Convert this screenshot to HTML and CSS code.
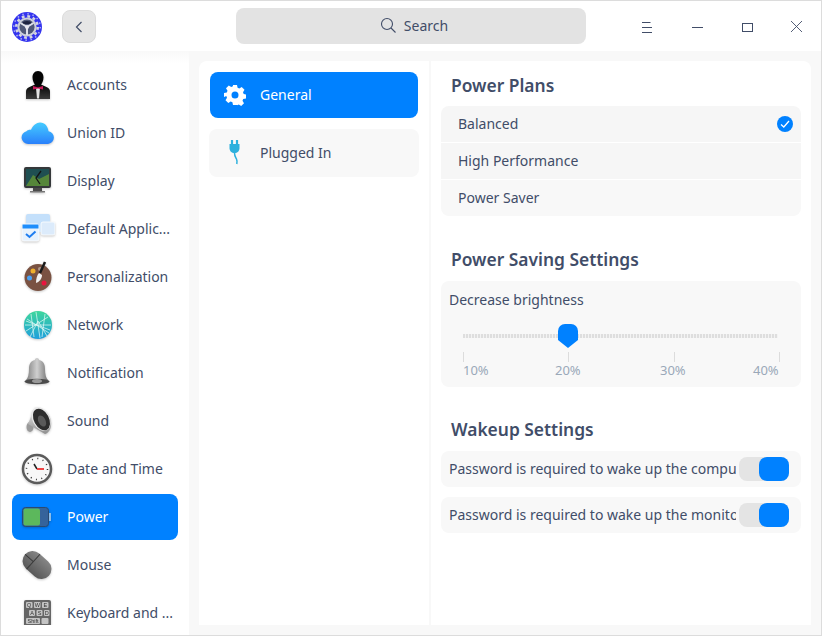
FILE: index.html
```html
<!DOCTYPE html>
<html lang="en">
<head>
<meta charset="utf-8">
<title>Control Center</title>
<link rel="stylesheet" href="styles.css">
</head>
<body>
<div class="window">
  <header class="titlebar">
    <div class="title-left">
      <svg class="logo" width="30" height="30" viewBox="0 0 30 30">
        <circle cx="15" cy="15" r="15" fill="#3434ee"/>
        <circle cx="15" cy="15" r="13.2" fill="none" stroke="#a9abf5" stroke-width="1.600" stroke-dasharray="1.500 3.680"/>
        <circle cx="15" cy="15" r="10.700" fill="none" stroke="#d4d6df" stroke-width="2.600" stroke-dasharray="2.800 2.800"/>
        <circle cx="15" cy="15" r="9.600" fill="#cdd0da"/>
        <circle cx="15" cy="15" r="7.600" fill="#4f5878"/>
        <path d="M15 15L8.500 11M15 15L21.500 11M15 15V23" stroke="#dfe1ea" stroke-width="2"/>
        <ellipse cx="15" cy="10.500" rx="4.200" ry="1.600" fill="#1d2340"/>
        <circle cx="15" cy="15" r="2" fill="#e8e8f2"/>
      </svg>
      <button class="back" type="button" aria-label="Back">
        <svg width="8" height="12" viewBox="0 0 8 12"><path d="M6.500 1L1.500 6l5 5" fill="none" stroke="#414d68" stroke-width="1.200"/></svg>
      </button>
    </div>
    <div class="search">
      <svg width="16" height="16" viewBox="0 0 16 16"><circle cx="7" cy="7" r="5.500" fill="none" stroke="#414d68" stroke-width="1.100"/><path d="M11 11l4.500 4.500" stroke="#414d68" stroke-width="1.100"/></svg>
      <span>Search</span>
    </div>
    <div class="winbtns">
      <svg class="winbtn" width="50" height="50" viewBox="0 0 50 50"><path d="M21 21.500h8.500M21 26.500h10M21 31.500h10" stroke="#414d68" stroke-width="1"/></svg>
      <svg class="winbtn" width="50" height="50" viewBox="0 0 50 50"><path d="M21 26.500h11" stroke="#414d68" stroke-width="1"/></svg>
      <svg class="winbtn" width="50" height="50" viewBox="0 0 50 50"><rect x="21.500" y="22.500" width="10" height="8" fill="none" stroke="#414d68" stroke-width="1"/></svg>
      <svg class="winbtn" width="50" height="50" viewBox="0 0 50 50"><path d="M20 20l11 11M31 20L20 31" stroke="#414d68" stroke-width=".9"/></svg>
    </div>
  </header>
  <div class="body">
    <nav class="sidebar">
      <div class="nav-list">
        <div class="nav-item">
          <svg class="nav-icon" width="34" height="32" viewBox="0 0 34 32"><defs><linearGradient id="su" x1="0" y1="0" x2="0" y2="1"><stop offset=".5" stop-color="#050505"/><stop offset="1" stop-color="#3c3c3c"/></linearGradient></defs><path d="M17 2c3.700 0 5.500 3 5.500 6.500 0 3-1.500 6-2.500 7l5.500 2.500c3 1 3.500 3 3.500 5v7H5v-7c0-2 .5-4 3.500-5l5.500-2.500c-1-1-2.500-4-2.500-7C11.500 5 13.300 2 17 2z" fill="url(#su)"/><path d="M15 19h4l-1 10.500h-2z" fill="#e4e4e4"/><path d="M12 17l5 1.500 5-1.500v3.500l-5-1-5 1z" fill="#c8185a"/></svg>
          <span class="nav-label">Accounts</span>
        </div>
        <div class="nav-item">
          <svg class="nav-icon" width="34" height="32" viewBox="0 0 34 32"><defs><linearGradient id="cl" x1="0" y1="0" x2="0" y2="1"><stop offset="0" stop-color="#45ccff"/><stop offset="1" stop-color="#2a80fb"/></linearGradient></defs><path d="M7 27a6.500 6.500 0 0 1-1.500-12.800c1-1.200 2.500-1.700 4.500-1.500C12 8.500 15.500 5.500 19 5.500c5 0 8 4 8.500 8.800A6.400 6.400 0 0 1 27 27z" fill="url(#cl)"/></svg>
          <span class="nav-label">Union ID</span>
        </div>
        <div class="nav-item">
          <svg class="nav-icon" width="34" height="32" viewBox="0 0 34 32"><rect x="3" y="2" width="27" height="21" rx="2" fill="#35383a"/><rect x="5" y="4" width="23" height="17" fill="#1f4f52"/><path d="M5 21l7-11 6 4 10-5v12z" fill="#55863a"/><path d="M20 6l-5 7 4 6" fill="none" stroke="#141414" stroke-width="1.300"/><rect x="12" y="23" width="9" height="3" fill="#4a4a4a"/><rect x="9" y="26" width="15" height="1.500" fill="#777"/></svg>
          <span class="nav-label">Display</span>
        </div>
        <div class="nav-item">
          <svg class="nav-icon" width="34" height="32" viewBox="0 0 34 32"><rect x="5" y="1" width="24" height="18" rx="2" fill="#c4e0fb"/><rect x="20" y="9" width="14" height="13" rx="2" fill="#dcebfb" stroke="#fff" stroke-width=".8"/><rect x="1" y="11" width="17" height="17" rx="2" fill="#e7f2fd" stroke="#fff" stroke-width=".8"/><rect x="1.500" y="11.500" width="16" height="4" fill="#1e8efc"/><path d="M5 21l3.500 3 6-5.500" fill="none" stroke="#1e7df0" stroke-width="2"/></svg>
          <span class="nav-label">Default Applic...</span>
        </div>
        <div class="nav-item">
          <svg class="nav-icon" width="34" height="32" viewBox="0 0 34 32"><circle cx="17" cy="16.500" r="13.500" fill="#7a5242"/><circle cx="12" cy="10" r="2.500" fill="#efb02d"/><circle cx="19" cy="8" r="2" fill="#b09a8c"/><circle cx="8.500" cy="17" r="2.500" fill="#4aa2f4"/><circle cx="23" cy="22" r="2.500" fill="#e8153f"/><path d="M24 1l-5 11" stroke="#1a1a1a" stroke-width="2.500"/><path d="M18 12c-2 2-3 6-3 10 3-1 6-4 6-8z" fill="#f2f2f2"/></svg>
          <span class="nav-label">Personalization</span>
        </div>
        <div class="nav-item">
          <svg class="nav-icon" width="34" height="32" viewBox="0 0 34 32"><defs><linearGradient id="nw" x1="0" y1="0" x2="0" y2="1"><stop offset="0" stop-color="#3ed79c"/><stop offset="1" stop-color="#1e9fdc"/></linearGradient></defs><circle cx="17" cy="16" r="14" fill="url(#nw)"/><path d="M15 3l4 26M5 22L27 8M6 10l22 14M17 12L9 28M17 12l9 15M4 16h26M10 5l3 23M24 5l-3 23M5 12l24 9" stroke="#e6fbf6" stroke-width=".7" fill="none"/></svg>
          <span class="nav-label">Network</span>
        </div>
        <div class="nav-item">
          <svg class="nav-icon" width="34" height="32" viewBox="0 0 34 32"><defs><linearGradient id="bl" x1="0" y1="0" x2="1" y2="0"><stop offset="0" stop-color="#808080"/><stop offset=".5" stop-color="#cfcfcf"/><stop offset="1" stop-color="#747474"/></linearGradient></defs><path d="M16 1c1.500 0 2 1 2 2 5 1 6 5 6 9 0 5 1 9 3 11H5c2-2 3-6 3-11 0-4 1-8 6-9 0-1 .5-2 2-2z" fill="url(#bl)"/><ellipse cx="16" cy="24.500" rx="12.500" ry="2.800" fill="#4b4b4b"/><ellipse cx="16" cy="24" rx="5" ry="2" fill="#999"/></svg>
          <span class="nav-label">Notification</span>
        </div>
        <div class="nav-item">
          <svg class="nav-icon" width="34" height="32" viewBox="0 0 34 32"><defs><linearGradient id="sd" x1="0" y1="0" x2="0" y2="1"><stop offset="0" stop-color="#f2f2f2"/><stop offset="1" stop-color="#8f8f8f"/></linearGradient></defs><ellipse cx="9" cy="22" rx="3.500" ry="5" fill="#9a9a9a"/><path d="M14 2L7 19l17 10c4-1 7-6 6-13-1-8-8-15-16-14z" fill="url(#sd)"/><ellipse cx="20" cy="14" rx="8.500" ry="12.500" transform="rotate(-28 20 14)" fill="#e9e9e9"/><ellipse cx="20.500" cy="14.500" rx="7.500" ry="11.500" transform="rotate(-28 20.500 14.500)" fill="#2e2e2e"/><ellipse cx="21" cy="16" rx="3.500" ry="6" transform="rotate(-28 21 16)" fill="#5a5a5a"/></svg>
          <span class="nav-label">Sound</span>
        </div>
        <div class="nav-item">
          <svg class="nav-icon" width="34" height="32" viewBox="0 0 34 32"><circle cx="16" cy="16" r="14" fill="#f8f8f8" stroke="#5b5b5b" stroke-width="2.500"/><circle cx="16" cy="16" r="10.500" fill="none" stroke="#333" stroke-width="1.500" stroke-dasharray="1 4.500"/><path d="M13 11l3 5" stroke="#222" stroke-width="1.500"/><path d="M16 16h7" stroke="#e33" stroke-width="1.800"/></svg>
          <span class="nav-label">Date and Time</span>
        </div>
        <div class="nav-item active">
          <svg class="nav-icon" width="34" height="32" viewBox="0 0 34 32"><rect x="1.500" y="6.500" width="26" height="19" rx="3" fill="#35639b" stroke="#2a4a70"/><rect x="2.500" y="7.500" width="16.500" height="17" rx="2" fill="#5cb85c"/><rect x="28" y="12" width="2" height="8" fill="#8dbde8"/></svg>
          <span class="nav-label">Power</span>
        </div>
        <div class="nav-item">
          <svg class="nav-icon" width="34" height="32" viewBox="0 0 34 32"><defs><linearGradient id="ms" x1="0" y1="0" x2="0" y2="1"><stop offset="0" stop-color="#858585"/><stop offset="1" stop-color="#585858"/></linearGradient></defs><g transform="rotate(42 16 16)"><rect x="0" y="6" width="32" height="20" rx="10" fill="url(#ms)"/><path d="M11 6v20M0 16h11" stroke="#3a3a3a" stroke-width="1"/></g></svg>
          <span class="nav-label">Mouse</span>
        </div>
        <div class="nav-item">
          <svg class="nav-icon" width="34" height="32" viewBox="0 0 34 32"><rect x="3" y="3" width="27" height="29" rx="2" fill="#666"/><g fill="#c4c4c4"><rect x="5" y="5" width="6.500" height="6" rx="1"/><rect x="13" y="5" width="6.500" height="6" rx="1"/><rect x="21" y="5" width="6.500" height="6" rx="1"/><rect x="8" y="13" width="6" height="6" rx="1"/><rect x="15.500" y="13" width="6" height="6" rx="1"/><rect x="23" y="13" width="5.500" height="6" rx="1"/><rect x="5" y="21" width="14" height="6" rx="1"/><rect x="20.500" y="21" width="7" height="6" rx="1"/></g><g class="key-text"><text x="8.250" y="10">Q</text><text x="16.250" y="10">W</text><text x="24.250" y="10">E</text><text x="11" y="18">A</text><text x="18.500" y="18">S</text><text x="25.750" y="18">D</text><text x="12" y="26">Shift</text></g></svg>
          <span class="nav-label">Keyboard and ...</span>
        </div>
      </div>
    </nav>
    <div class="content">
      <aside class="subnav">
        <div class="sub-item selected">
          <svg class="sub-icon" width="22" height="22" viewBox="0 0 22 22"><path fill-rule="evenodd" fill="#fff" d="M9 1h4l.6 2.800 1.700.7 2.400-1.500 2.800 2.800-1.500 2.400.7 1.700 2.300.6v4l-2.800.6-.7 1.700 1.500 2.400-2.800 2.800-2.400-1.500-1.700.7L13 21H9l-.6-2.800-1.700-.7-2.400 1.500-2.800-2.800 1.500-2.400-.7-1.700L0 13V9l2.800-.6.7-1.700L2 4.300 4.800 1.500l2.400 1.500 1.700-.7zM11 7.500a3.500 3.500 0 1 0 0 7 3.500 3.500 0 0 0 0-7z"/></svg>
          <span>General</span>
        </div>
        <div class="sub-item plugged">
          <svg class="sub-icon" width="22" height="28" viewBox="0 0 22 28"><path d="M8 1v4M13 1v4" stroke="#2cb0dd" stroke-width="2.200"/><path d="M5.500 5h10v4c0 3-2 5-5 5s-5-2-5-5z" fill="#2cb0dd"/><path d="M10.500 14c0 3 1 4 2 6 .7 1.500.7 3 .3 5" fill="none" stroke="#2cb0dd" stroke-width="1.500"/></svg>
          <span>Plugged In</span>
        </div>
      </aside>
      <main class="settings">
        <section class="group">
          <h2 class="group-title">Power Plans</h2>
          <ul class="plans">
            <li class="plan"><span>Balanced</span>
              <svg width="16" height="16" viewBox="0 0 16 16"><circle cx="8" cy="8" r="8" fill="#0081ff"/><path d="M4 8.500l2.800 2.500L12 5" fill="none" stroke="#fff" stroke-width="1.300"/></svg>
            </li>
            <li class="plan">High Performance</li>
            <li class="plan">Power Saver</li>
          </ul>
        </section>
        <section class="group saving">
          <h2 class="group-title">Power Saving Settings</h2>
          <div class="card">
            <div class="card-label">Decrease brightness</div>
            <div class="slider">
              <div class="track"></div>
              <svg class="thumb" width="20" height="24" viewBox="0 0 20 24"><path d="M7 0h6a7 7 0 0 1 7 7v9l-10 8L0 16V7a7 7 0 0 1 7-7z" fill="#0081ff"/></svg>
            </div>
            <div class="ticks"><i></i><i></i><i></i><i></i></div>
            <div class="tick-labels"><span>10%</span><span>20%</span><span>30%</span><span>40%</span></div>
          </div>
        </section>
        <section class="group wakeup">
          <h2 class="group-title">Wakeup Settings</h2>
          <div class="switch-row">
            <span class="switch-text">Password is required to wake up the computer</span>
            <span class="toggle"><span class="knob"></span></span>
          </div>
          <div class="switch-row">
            <span class="switch-text">Password is required to wake up the monitor</span>
            <span class="toggle"><span class="knob"></span></span>
          </div>
        </section>
      </main>
    </div>
  </div>
</div>
</body>
</html>
```

FILE: styles.css
```css
* { box-sizing: border-box; }
html, body { margin: 0; padding: 0; }
body {
  width: 822px;
  height: 636px;
  overflow: hidden;
  font-family: "Noto Sans", sans-serif;
  font-size: 14px;
  color: #414d68;
  background: #fff;
}
.window {
  width: 822px;
  height: 636px;
  border: 1px solid #dcdcdc;
  display: flex;
  flex-direction: column;
  background: #f8f8f8;
}
.titlebar {
  height: 50px;
  flex: none;
  background: #fff;
  display: flex;
  align-items: flex-start;
}
.title-left {
  display: flex;
  align-items: center;
  gap: 20px;
  padding: 9px 0 0 11px;
}
.logo { display: block; }
.back {
  width: 34px;
  height: 33px;
  padding: 0;
  border: 1px solid #dcdcdc;
  border-radius: 8px;
  background: #e6e6e6;
  display: flex;
  align-items: center;
  justify-content: center;
}
.search {
  width: 350px;
  height: 36px;
  margin: 7px 0 0 140px;
  padding: 0 0 2px 6px;
  border-radius: 8px;
  background: #e3e3e3;
  display: flex;
  align-items: center;
  justify-content: center;
  gap: 8px;
}
.winbtns {
  display: flex;
  margin-left: auto;
}
.winbtn { display: block; }
.body {
  flex: 1;
  min-height: 0;
  display: flex;
}
.sidebar {
  width: 188px;
  flex: none;
  background: linear-gradient(#f9f9f9, #fff 12px);
}
.nav-list {
  height: 574px;
  overflow: hidden;
  padding: 11px 11px 0;
  display: flex;
  flex-direction: column;
  gap: 2px;
}
.nav-item {
  height: 46px;
  flex: none;
  display: flex;
  align-items: center;
  gap: 12px;
  padding: 0 0 1px 9px;
  border-radius: 8px;
}
.nav-icon {
  flex: none;
  filter: drop-shadow(0 1px 1px rgba(0, 0, 0, .22));
}
.nav-label { white-space: nowrap; }
.nav-item.active { background: #0081ff; color: #fff; }
.key-text {
  font-family: "Liberation Sans", sans-serif;
  font-size: 5.5px;
  fill: #333;
  text-anchor: middle;
}
.content {
  width: 612px;
  height: 564px;
  margin: 10px 0 0 10px;
  display: flex;
  background: #fff;
  border-radius: 8px 8px 0 0;
}
.subnav {
  width: 232px;
  flex: none;
  padding: 11px 10px 0;
  border-right: 2px solid #f8f8f8;
  display: flex;
  flex-direction: column;
  gap: 11px;
}
.sub-item {
  display: flex;
  align-items: center;
  gap: 14px;
  border-radius: 8px;
  line-height: 18px;
}
.sub-icon { flex: none; }
.sub-item.selected {
  height: 46px;
  margin: 0 1px;
  padding-left: 14px;
  background: #0081ff;
  color: #fff;
}
.sub-item.plugged {
  height: 48px;
  padding-left: 15px;
  background: #f8f8f8;
}
.settings {
  flex: 1;
  min-width: 0;
  padding: 11px 10px 0;
}
.group-title {
  margin: 0 0 8px 10px;
  height: 26px;
  line-height: 26px;
  font-size: 17.4px;
  font-weight: 600;
  color: #414d68;
}
.plans {
  list-style: none;
  margin: 0;
  padding: 0;
  border-radius: 8px;
  overflow: hidden;
}
.plan {
  height: 36px;
  margin-bottom: 1px;
  padding: 0 8px 0 17px;
  background: #f6f6f6;
  display: flex;
  align-items: center;
  justify-content: space-between;
  line-height: 18px;
}
.plan:last-child { margin-bottom: 0; background: #f8f8f8; }
.saving { margin-top: 30px; }
.saving .group-title { margin-bottom: 9px; }
.card {
  height: 106px;
  padding: 8px 8px 0;
  background: #f8f8f8;
  border-radius: 8px;
}
.card-label { line-height: 22px; }
.slider {
  position: relative;
  height: 24px;
  margin: 13px 15px 0 14px;
  display: flex;
  align-items: center;
}
.track {
  width: 100%;
  height: 4px;
  background: repeating-linear-gradient(90deg, #dedede 0 2px, #f3f3f3 2px 3px);
}
.thumb {
  position: absolute;
  left: 95px;
  top: 0;
}
.ticks {
  display: flex;
  justify-content: space-between;
  height: 10px;
  margin: 4px 13px 0 14px;
}
.ticks i {
  display: block;
  width: 1px;
  background: #dcdcdc;
}
.tick-labels {
  display: grid;
  grid-template-columns: 92px 105px 93px auto;
  margin: -1px 0 0 14px;
  font-size: 13px;
  line-height: 18px;
  color: #9aa8b8;
}
.wakeup { margin-top: 29px; }
.wakeup .group-title { margin-bottom: 9px; }
.switch-row {
  height: 36px;
  margin-bottom: 10px;
  padding: 0 12px 0 8px;
  background: #f8f8f8;
  border-radius: 8px;
  display: flex;
  align-items: center;
  gap: 3px;
  line-height: 18px;
}
.switch-text {
  width: 287px;
  flex: none;
  overflow: hidden;
  white-space: nowrap;
}
.toggle {
  width: 50px;
  height: 24px;
  flex: none;
  background: #e4e4e4;
  border-radius: 8px;
  display: flex;
  justify-content: flex-end;
}
.knob {
  width: 30px;
  height: 24px;
  background: #0081ff;
  border-radius: 8px;
}
```
